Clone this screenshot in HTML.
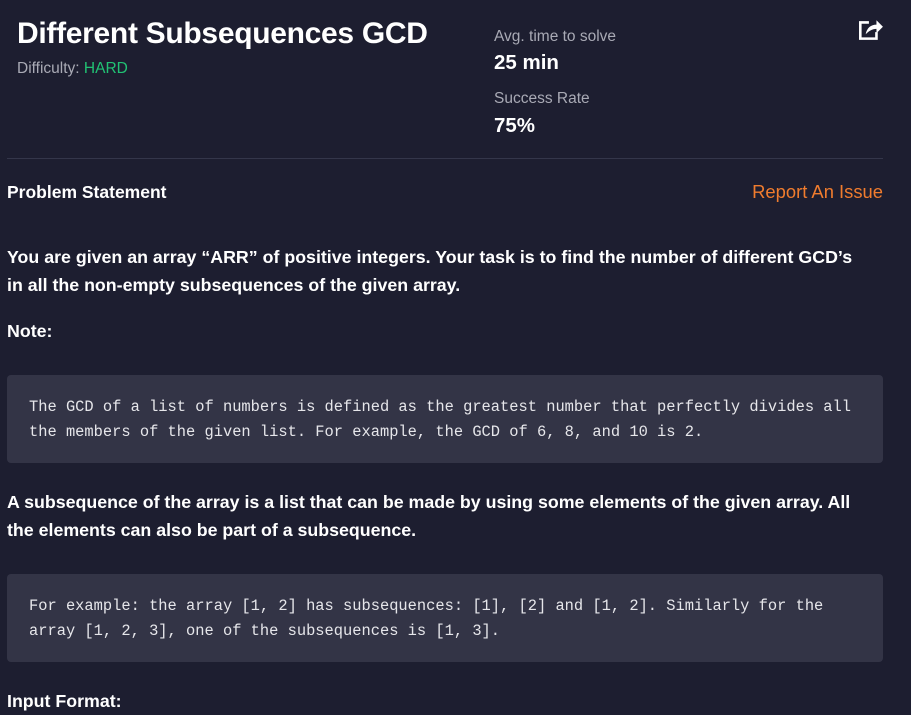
<!DOCTYPE html>
<html><head><meta charset="utf-8"><style>
*{margin:0;padding:0;box-sizing:border-box}
body{width:911px;height:705px;overflow:hidden;background:#1d1e30;color:#fff;font-family:"Liberation Sans",sans-serif;position:relative}
.abs{position:absolute;white-space:nowrap}
.t{left:17px;top:17px;font-size:30px;font-weight:bold;letter-spacing:-0.3px}
.d{left:17px;top:60px;font-size:15.5px;color:#a9aab5}
.d span{color:#21c274}
.lbl{font-size:15.5px;color:#a9aab5}
.val{font-size:20.5px;font-weight:bold}
hr{position:absolute;left:7px;top:158px;width:876px;border:0;border-top:1px solid #34364a}
.h{font-size:17.5px;font-weight:bold}
.p{left:7px;font-size:17.8px;font-weight:bold;line-height:28px;white-space:normal;width:866px}
.code{position:absolute;left:7px;width:876px;background:#333446;border-radius:4px;padding:0 22px;font-family:"Liberation Mono",monospace;font-size:15.4px;line-height:25px;color:#e6e6ea;white-space:pre}
</style></head><body>
<div class="abs t">Different Subsequences GCD</div>
<div class="abs d">Difficulty: <span>HARD</span></div>
<div class="abs lbl" style="left:494px;top:28px">Avg. time to solve</div>
<div class="abs val" style="left:494px;top:51px">25 min</div>
<div class="abs lbl" style="left:494px;top:90px">Success Rate</div>
<div class="abs val" style="left:494px;top:114px">75%</div>
<svg class="abs" style="left:856px;top:17px" width="28" height="26" viewBox="0 0 26 24">
<path d="M12 5H4v15h15v-6" fill="none" stroke="#fff" stroke-width="2.4"/>
<path d="M9 16c1-6 5-9 10-9V3l6 6-6 6v-4c-4 0-7 2-10 5z" fill="#fff"/>
</svg>
<hr>
<div class="abs h" style="left:7px;top:182px">Problem Statement</div>
<div class="abs" style="right:28px;top:181px;font-size:18.4px;color:#f07c2e">Report An Issue</div>
<div class="abs p" style="top:243px;width:860px">You are given an array “ARR” of positive integers. Your task is to find the number of different GCD’s in all the non-empty subsequences of the given array.</div>
<div class="abs p" style="top:317px">Note:</div>
<div class="code" style="top:375px;height:88px;padding-top:20px">The GCD of a list of numbers is defined as the greatest number that perfectly divides all
the members of the given list. For example, the GCD of 6, 8, and 10 is 2.</div>
<div class="abs p" style="top:488px">A subsequence of the array is a list that can be made by using some elements of the given array. All the elements can also be part of a subsequence.</div>
<div class="code" style="top:574px;height:88px;padding-top:20px">For example: the array [1, 2] has subsequences: [1], [2] and [1, 2]. Similarly for the
array [1, 2, 3], one of the subsequences is [1, 3].</div>
<div class="abs p" style="top:687px">Input Format:</div>
</body></html>
